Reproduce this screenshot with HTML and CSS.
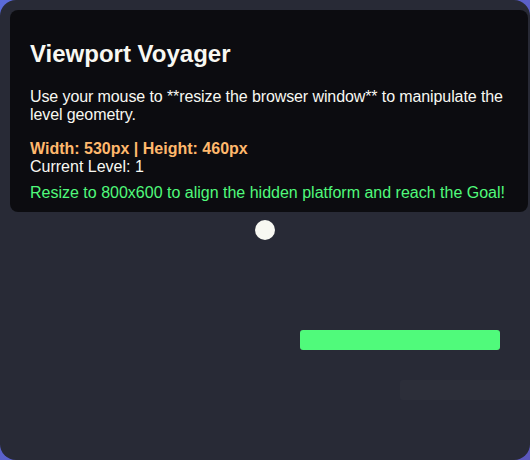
FILE: index.html
```html
<!DOCTYPE html>
<html lang="en">
<head>
  <meta charset="UTF-8">
  <meta name="viewport" content="width=device-width, initial-scale=1">
  <title>Viewport Voyager</title>
  <link rel="stylesheet" href="styles.css">
</head>
<body>
  <div class="game">
    <div class="hud">
      <h2>Viewport Voyager</h2>
      <p>Use your mouse to **resize the browser window** to manipulate the level geometry.</p>
      <div class="stats">
        <span class="dims">Width: 530px | Height: 460px</span><br>
        Current Level: 1
      </div>
      <div class="hint">Resize to 800x600 to align the hidden platform and reach the Goal!</div>
    </div>

    <div class="player"></div>
    <div class="platform goal"></div>
    <div class="platform hidden"></div>
  </div>
</body>
</html>
```

FILE: styles.css
```css
* {
  box-sizing: border-box;
}
body {
  margin: 0;
  height: 100vh;
  overflow: hidden;
  background: linear-gradient(135deg, #5a6ad8, #5b57bd);
  font-family: 'Liberation Sans', Arial, sans-serif;
  color: #f8f8f2;
}
.game {
  position: relative;
  width: 100%;
  height: 100%;
  background-color: #282a36;
  border-radius: 16px;
  overflow: hidden;
}
.hud {
  position: absolute;
  top: 10px;
  left: 10px;
  right: 2px;
  padding: 10px 12px 10px 20px;
  background-color: rgba(0, 0, 0, 0.7);
  border-radius: 8px;
}
.hud h2 {
  font-size: 24px;
  margin: 20px 0;
}
.hud p {
  font-size: 16px;
  margin: 0 0 16px;
  letter-spacing: -0.1px;
}
.dims {
  color: #ffb86c;
  font-weight: bold;
}
.hint {
  margin-top: 8px;
  color: #50fa7b;
}
.player {
  position: absolute;
  left: 255px;
  top: 220px;
  width: 20px;
  height: 20px;
  border-radius: 50%;
  background-color: #f8f8f2;
}
.platform {
  position: absolute;
  height: 20px;
  border-radius: 3px;
}
.goal {
  left: 300px;
  top: 330px;
  width: 200px;
  background-color: #50fa7b;
}
.hidden {
  left: 400px;
  top: 380px;
  width: 200px;
  background-color: rgba(255, 255, 255, 0.02);
}
```
